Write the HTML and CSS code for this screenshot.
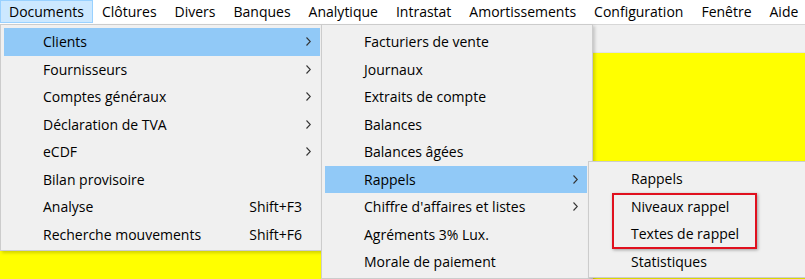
FILE: index.html
```html
<!DOCTYPE html>
<html lang="fr">
<head>
<meta charset="utf-8">
<title>Menu</title>
<link rel="stylesheet" href="styles.css">
</head>
<body>
<div class="app">
  <nav class="menubar">
    <span class="mb-item active">Documents</span>
    <span class="mb-item">Clôtures</span>
    <span class="mb-item">Divers</span>
    <span class="mb-item">Banques</span>
    <span class="mb-item">Analytique</span>
    <span class="mb-item">Intrastat</span>
    <span class="mb-item">Amortissements</span>
    <span class="mb-item">Configuration</span>
    <span class="mb-item">Fenêtre</span>
    <span class="mb-item">Aide</span>
  </nav>
  <div class="workspace">
    <div class="toolstrip"></div>
    <div class="content"></div>
  </div>

  <div class="menu menu-1">
    <div class="mi hl"><span class="lbl">Clients</span><span class="arr"><svg viewBox="0 0 5 9" width="5" height="9"><polyline points="0.5,0.5 4.3,4.5 0.5,8.5"/></svg></span></div>
    <div class="mi"><span class="lbl">Fournisseurs</span><span class="arr"><svg viewBox="0 0 5 9" width="5" height="9"><polyline points="0.5,0.5 4.3,4.5 0.5,8.5"/></svg></span></div>
    <div class="mi"><span class="lbl">Comptes généraux</span><span class="arr"><svg viewBox="0 0 5 9" width="5" height="9"><polyline points="0.5,0.5 4.3,4.5 0.5,8.5"/></svg></span></div>
    <div class="mi"><span class="lbl">Déclaration de TVA</span><span class="arr"><svg viewBox="0 0 5 9" width="5" height="9"><polyline points="0.5,0.5 4.3,4.5 0.5,8.5"/></svg></span></div>
    <div class="mi"><span class="lbl">eCDF</span><span class="arr"><svg viewBox="0 0 5 9" width="5" height="9"><polyline points="0.5,0.5 4.3,4.5 0.5,8.5"/></svg></span></div>
    <div class="mi"><span class="lbl">Bilan provisoire</span><span class="arr"></span></div>
    <div class="mi"><span class="lbl">Analyse</span><span class="sc">Shift+F3</span><span class="arr"></span></div>
    <div class="mi"><span class="lbl">Recherche mouvements</span><span class="sc">Shift+F6</span><span class="arr"></span></div>
  </div>

  <div class="menu menu-2">
    <div class="mi"><span class="lbl">Facturiers de vente</span><span class="arr"></span></div>
    <div class="mi"><span class="lbl">Journaux</span><span class="arr"></span></div>
    <div class="mi"><span class="lbl">Extraits de compte</span><span class="arr"></span></div>
    <div class="mi"><span class="lbl">Balances</span><span class="arr"></span></div>
    <div class="mi"><span class="lbl">Balances âgées</span><span class="arr"></span></div>
    <div class="mi hl"><span class="lbl">Rappels</span><span class="arr"><svg viewBox="0 0 5 9" width="5" height="9"><polyline points="0.5,0.5 4.3,4.5 0.5,8.5"/></svg></span></div>
    <div class="mi"><span class="lbl">Chiffre d'affaires et listes</span><span class="arr"><svg viewBox="0 0 5 9" width="5" height="9"><polyline points="0.5,0.5 4.3,4.5 0.5,8.5"/></svg></span></div>
    <div class="mi"><span class="lbl">Agréments 3% Lux.</span><span class="arr"></span></div>
    <div class="mi"><span class="lbl">Morale de paiement</span><span class="arr"></span></div>
  </div>

  <div class="menu menu-3">
    <div class="mi"><span class="lbl">Rappels</span></div>
    <div class="mi"><span class="lbl">Niveaux rappel</span></div>
    <div class="mi"><span class="lbl">Textes de rappel</span></div>
    <div class="mi"><span class="lbl">Statistiques</span></div>
  </div>

  <div class="callout"></div>
</div>
</body>
</html>
```

FILE: styles.css
```css
* { box-sizing: border-box; }
html, body { margin: 0; padding: 0; }
body {
  width: 805px;
  height: 279px;
  overflow: hidden;
  background: #ffffff;
  font-family: "Open Sans", "Noto Sans", sans-serif;
  font-size: 14px;
  color: #000;
}
.app {
  position: relative;
  width: 805px;
  height: 279px;
  overflow: hidden;
  display: flex;
  flex-direction: column;
}
.menubar {
  height: 24px;
  display: flex;
  align-items: stretch;
  background: #fff;
  padding-left: 0;
}
.mb-item {
  display: flex;
  align-items: center;
  padding: 0 8px 1px 8px;
  height: 23px;
  border: 1px solid transparent;
  white-space: nowrap;
}
.mb-item.active {
  background: #cce8ff;
  border-color: #99d1ff;
}
.workspace {
  flex: 1;
  display: flex;
  flex-direction: column;
}
.toolstrip {
  height: 29px;
  background: #f0f0f0;
  border-top: 1px solid #d7d7d7;
  border-bottom: 1px solid #e3e3e3;
}
.content {
  flex: 1;
  background: #ffff00;
}
.menu {
  position: absolute;
  background: #f0f0f0;
  border: 1px solid #cccccc;
  box-shadow: 2px 2px 3px rgba(0,0,0,0.18);
}
.menu-1 {
  left: 0;
  top: 24px;
  width: 322px;
  padding: 3px 1px 2px 3px;
}
.menu-2 {
  left: 321px;
  top: 24px;
  width: 272px;
  padding: 3px 5px 2px 3px;
}
.menu-3 {
  left: 588px;
  top: 161px;
  width: 240px;
  padding: 3px 3px 2px 3px;
}
.mi {
  height: 27.5px;
  display: flex;
  align-items: center;
  padding-left: 39px;
  white-space: nowrap;
}
.mi.hl { background: #91c9f7; }
.lbl { flex: 1; }
.sc { padding-right: 0; }
.arr {
  width: 18px;
  height: 9px;
  display: flex;
  padding-left: 4px;
}
.arr svg {
  display: block;
  fill: none;
  stroke: #333;
  stroke-width: 1.1;
}
.callout {
  position: absolute;
  left: 612px;
  top: 193px;
  width: 145px;
  height: 56px;
  border: 2px solid #e0101e;
  box-shadow: 1px 1px 3px rgba(0,0,0,0.35);
}
```
